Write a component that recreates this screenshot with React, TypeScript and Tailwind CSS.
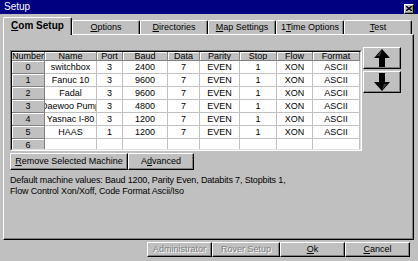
import React from "react";

const raised =
  "border border-t-white border-l-white border-r-black border-b-black shadow-[inset_-1px_-1px_0_#808080]";

const cols = [
  { name: "Number", w: "w-[33px]" },
  { name: "Name", w: "w-[52px]" },
  { name: "Port", w: "w-[26px]" },
  { name: "Baud", w: "w-[45px]" },
  { name: "Data", w: "w-[32px]" },
  { name: "Parity", w: "w-[40px]" },
  { name: "Stop", w: "w-[37px]" },
  { name: "Flow", w: "w-[36px]" },
  { name: "Format", w: "w-[47px]" },
];

const rows = [
  ["0", "switchbox", "3", "2400", "7", "EVEN", "1", "XON", "ASCII"],
  ["1", "Fanuc 10", "3", "9600", "7", "EVEN", "1", "XON", "ASCII"],
  ["2", "Fadal", "3", "9600", "7", "EVEN", "1", "XON", "ASCII"],
  ["3", "Daewoo Pump", "3", "4800", "7", "EVEN", "1", "XON", "ASCII"],
  ["4", "Yasnac I-80", "3", "1200", "7", "EVEN", "1", "XON", "ASCII"],
  ["5", "HAAS", "1", "1200", "7", "EVEN", "1", "XON", "ASCII"],
  ["6", "", "", "", "", "", "", "", ""],
];

const tabs = [
  { pre: "", key: "O", post: "ptions" },
  { pre: "", key: "D", post: "irectories" },
  { pre: "", key: "M", post: "ap Settings" },
  { pre: "1", key: "T", post: "ime Options" },
  { pre: "", key: "T", post: "est" },
];

function Arrow({ down }: { down?: boolean }) {
  return (
    <svg width="16" height="18" viewBox="0 0 16 18" className={down ? "rotate-180" : ""}>
      <polygon points="8,0 16,9 11,9 11,18 5,18 5,9 0,9" fill="#000" />
      <polygon points="8,1 3,7 6,7" fill="#404040" />
    </svg>
  );
}

function Btn({ children, w, disabled }: { children: React.ReactNode; w: string; disabled?: boolean }) {
  return (
    <div
      className={`${raised} ${w} h-full flex items-center justify-center bg-[#c0c0c0] ${
        disabled ? "text-[#808080] [text-shadow:1px_1px_0_#fff]" : "text-black"
      }`}
    >
      {children}
    </div>
  );
}

export default function App() {
  return (
    <div className="w-[418px] h-[261px] bg-[#c0c0c0] flex flex-col overflow-hidden font-['Liberation_Sans',Arial,sans-serif] text-[9px] text-black">
      {/* Title bar */}
      <div className="h-[14px] bg-[#000080] flex items-center justify-between pl-[4px] pr-[4px] shrink-0">
        <span className="text-white text-[10px] leading-none">Setup</span>
        <div className={`${raised} w-[10px] h-[10px] bg-[#c0c0c0] flex items-center justify-center mt-[3px]`}>
          <svg width="6" height="5" viewBox="0 0 6 5">
            <path d="M0 0 L6 5 M6 0 L0 5" stroke="#000" strokeWidth="1.4" />
          </svg>
        </div>
      </div>

      {/* Tabs */}
      <div className="h-[17px] mt-[3px] pl-[3px] flex items-end shrink-0">
        <div className="relative z-10 w-[69px] h-[18px] -mb-[1px] bg-[#c0c0c0] border-t border-l border-white border-r border-r-black rounded-tl-[2px] rounded-tr-[2px] shadow-[inset_-1px_0_0_#808080] flex items-center justify-center font-bold text-[10px] pb-[2px]">
          <span>
            <span className="underline">C</span>om Setup
          </span>
        </div>
        {tabs.map((t, i) => (
          <div
            key={i}
            className={`${i === 4 ? "w-[68px]" : "w-[68px]"} h-[14px] border-t border-l border-white border-r border-r-black rounded-tl-[2px] rounded-tr-[2px] shadow-[inset_-1px_0_0_#808080] flex items-center justify-center`}
          >
            <span>
              {t.pre}
              <span className="underline">{t.key}</span>
              {t.post}
            </span>
          </div>
        ))}
      </div>

      {/* Panel */}
      <div className="ml-[3px] w-[411px] h-[206px] shrink-0 border-t border-l border-white border-r border-b border-r-black border-b-black shadow-[inset_-1px_-1px_0_#808080] flex pt-[12px] pl-[6px]">
        <div className="flex flex-col mt-[3px]">
          {/* Grid */}
          <div className="w-[352px] h-[101px] border border-t-[#808080] border-l-[#808080] border-r-white border-b-white">
            <div className="w-full h-full border border-t-black border-l-black border-r-[#dfdfdf] border-b-[#dfdfdf] overflow-hidden bg-white">
              <div className="flex h-[9px]">
                {cols.map((c) => (
                  <div
                    key={c.name}
                    className={`${c.w} h-full shrink-0 bg-[#c0c0c0] border-r border-b border-r-[#808080] border-b-[#808080] shadow-[inset_1px_1px_0_#fff] flex items-center justify-center overflow-hidden whitespace-nowrap leading-none`}
                  >
                    {c.name}
                  </div>
                ))}
              </div>
              {rows.map((r) => (
                <div key={r[0]} className="flex h-[13px]">
                  {r.map((v, j) => (
                    <div
                      key={j}
                      className={`${cols[j].w} h-full shrink-0 flex items-center justify-center overflow-hidden whitespace-nowrap leading-none ${
                        j === 0
                          ? "bg-[#c0c0c0] border-r border-b border-r-[#808080] border-b-[#808080] shadow-[inset_1px_1px_0_#fff]"
                          : "bg-white border-r border-b border-[#c0c0c0]"
                      }`}
                    >
                      {v}
                    </div>
                  ))}
                </div>
              ))}
            </div>
          </div>

          {/* Grid buttons */}
          <div className="flex h-[17px] mt-[2px]">
            <Btn w="w-[118px]">
              <span>
                <span className="underline">R</span>emove Selected Machine
              </span>
            </Btn>
            <Btn w="w-[66px]">
              <span>
                A<span className="underline">d</span>vanced
              </span>
            </Btn>
          </div>

          <p className="mt-[5px] leading-[11px] tracking-[-0.15px]">
            Default machine values: Baud 1200, Parity Even, Databits 7, Stopbits 1,
            <br />
            Flow Control Xon/Xoff, Code Format Ascii/Iso
          </p>
        </div>

        {/* Move buttons */}
        <div className="flex flex-col ml-[1px]">
          <div className={`${raised} w-[38px] h-[22px] flex items-center justify-center`}>
            <Arrow />
          </div>
          <div className={`${raised} w-[38px] h-[22px] mt-[2px] flex items-center justify-center`}>
            <Arrow down />
          </div>
        </div>
      </div>

      {/* Footer */}
      <div className="h-[15px] mt-[2px] flex justify-end pr-[8px] shrink-0">
        <Btn w="w-[65px]" disabled>
          Administrator
        </Btn>
        <Btn w="w-[68px]" disabled>
          Rover Setup
        </Btn>
        <Btn w="w-[65px]">
          <span>
            <span className="underline">O</span>k
          </span>
        </Btn>
        <Btn w="w-[65px]">
          <span>
            <span className="underline">C</span>ancel
          </span>
        </Btn>
      </div>
    </div>
  );
}
